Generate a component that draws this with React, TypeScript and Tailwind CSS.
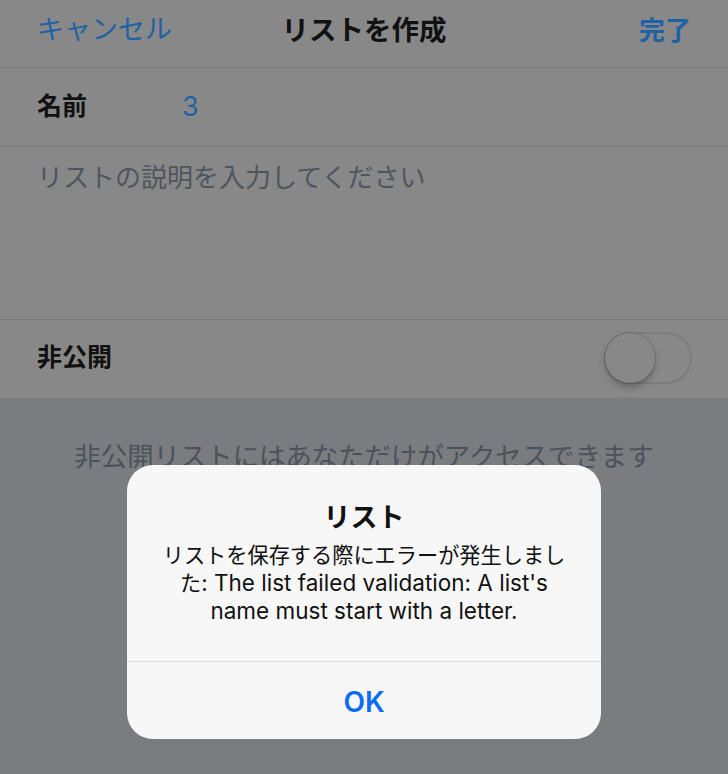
import { useState } from "react";

const font = "font-['Inter','Noto_Sans_CJK_JP',sans-serif]";

function Toggle({ on }: { on: boolean }) {
  return (
    <div className="relative h-[52px] w-[88px] rounded-full border-2 border-[#7c7c7c] bg-[#888888]">
      <div
        className={`absolute top-[-1px] h-[50px] w-[50px] rounded-full bg-[#888888] shadow-[0_4px_6px_rgba(0,0,0,0.25),0_0_0_1px_rgba(0,0,0,0.1)] ${
          on ? "right-[-1px]" : "left-[-1px]"
        }`}
      />
    </div>
  );
}

export default function App() {
  const [isPrivate] = useState(false);

  return (
    <div className={`relative h-[774px] w-full overflow-hidden bg-[#7b7c80] ${font}`}>
      {/* Nav bar */}
      <div className="flex h-[68px] items-center justify-between border-b border-[#7a7a7a] bg-[#888888] px-[37px] pb-[6px]">
        <span className="w-[150px] text-[27px] text-[#1e62a6]">キャンセル</span>
        <span className="text-[27.5px] font-bold text-[#111111]">リストを作成</span>
        <span className="w-[150px] text-right text-[26px] font-semibold text-[#1e62a6]">完了</span>
      </div>

      {/* Name */}
      <div className="flex h-[79px] items-center border-b border-[#7a7a7a] bg-[#888888] px-[37px]">
        <span className="w-[145px] text-[25px] font-bold text-[#111111]">名前</span>
        <span className="text-[27px] text-[#1e62a6]">3</span>
      </div>

      {/* Description */}
      <div className="h-[173px] border-b border-[#7a7a7a] bg-[#888888] px-[37px] pt-[11px]">
        <span className="text-[26px] text-[#4f555e]">リストの説明を入力してください</span>
      </div>

      {/* Private */}
      <div className="flex h-[79px] items-center justify-between border-b border-[#7a7a7a] bg-[#888888] pl-[37px] pr-[36px] pb-[2px]">
        <span className="text-[25px] font-bold text-[#111111]">非公開</span>
        <Toggle on={isPrivate} />
      </div>

      <p className="pt-[38px] text-center text-[26.4px] text-[#4a525b]">
        非公開リストにはあなただけがアクセスできます
      </p>

      {/* Alert */}
      <div className="absolute inset-0 flex justify-center pt-[465px]">
        <div className="flex h-[274px] w-[474px] flex-col rounded-[26px] bg-[#f7f7f7] text-center">
          <div className="px-[20px] pt-[35px] pb-[36px]">
            <h2 className="text-[27px] leading-[36px] font-bold text-[#111111]">リスト</h2>
            <p className="mt-[5px] text-[21.2px] leading-[28px] text-[#111111]">
              リストを保存する際にエラーが発生しまし
              <br />
              た<span className="text-[22.5px]">: The list failed validation: A list's</span>
              <br />
              <span className="text-[22.5px]">name must start with a letter.</span>
            </p>
          </div>
          <button className="flex flex-1 items-center justify-center border-t border-[#dcdce0] pt-[2px] text-[28px] font-semibold text-[#0a6cf5]">
            OK
          </button>
        </div>
      </div>
    </div>
  );
}
